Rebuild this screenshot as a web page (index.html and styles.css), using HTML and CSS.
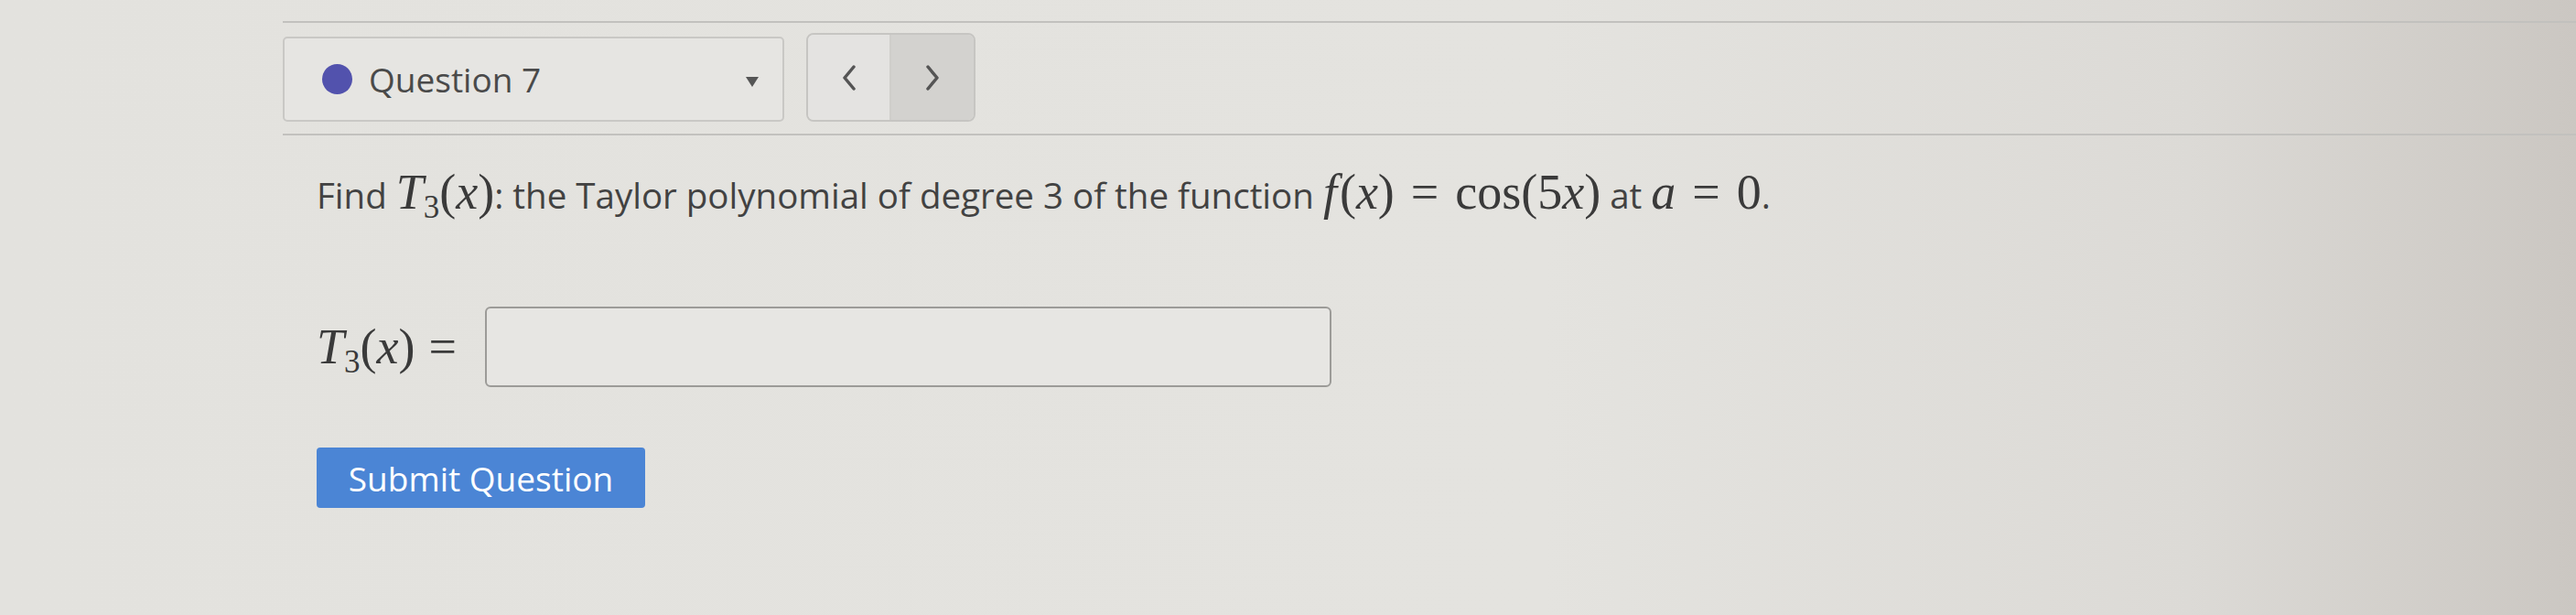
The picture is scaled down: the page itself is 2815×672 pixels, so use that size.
FILE: index.html
```html
<!DOCTYPE html>
<html lang="en">
<head>
  <meta charset="UTF-8">
  <title>Question 7</title>
  <link rel="stylesheet" href="styles.css">
</head>
<body>

<div class="qbar">
  <div class="qselect">
    <span class="dot"></span>
    <span class="qname">Question 7</span>
    <span class="caret"></span>
  </div>
  <div class="qnav">
    <button class="navbtn" aria-label="Previous">
      <svg width="16" height="28" viewBox="0 0 16 28"><polyline points="13,2 3,14 13,26" fill="none" stroke="#555" stroke-width="3.5" stroke-linejoin="round" stroke-linecap="round"/></svg>
    </button>
    <button class="navbtn hover" aria-label="Next">
      <svg width="16" height="28" viewBox="0 0 16 28"><polyline points="3,2 13,14 3,26" fill="none" stroke="#555" stroke-width="3.5" stroke-linejoin="round" stroke-linecap="round"/></svg>
    </button>
  </div>
</div>

<div class="question">
  <p class="prompt">Find <span class="math"><i>T</i><sub>3</sub>(<i>x</i>)</span>: the Taylor polynomial of degree 3 of the function <span class="math"><i class="fn">f</i>(<i>x</i>)<span class="rel">=</span>cos(5<i>x</i>)</span> at <span class="math"><i>a</i><span class="rel">=</span>0</span>.</p>

  <div class="answer-row">
    <label class="math answer-label" for="ans"><i>T</i><sub>3</sub>(<i>x</i>)<span class="rel">=</span></label>
    <input type="text" id="ans" class="answer">
  </div>

  <button class="submit">Submit Question</button>
</div>

</body>
</html>
```

FILE: styles.css
```css
body {
  margin: 0;
  width: 2815px;
  height: 672px;
  overflow: hidden;
  font-family: "Open Sans", "Noto Sans", sans-serif;
  color: #424242;
  background: linear-gradient(90deg, #e3e2de 0%, #e4e3df 60%, #dcdad6 85%, #cbc7c2 100%);
}
.qbar {
  display: flex;
  align-items: flex-start;
  margin: 23px 0 0 309px;
  padding: 11px 0 13px;
  border-top: 2px solid #c2c1be;
  border-bottom: 2px solid #c2c1be;
}
.qselect {
  display: flex;
  align-items: center;
  box-sizing: border-box;
  width: 548px;
  height: 93px;
  margin-top: 4px;
  padding: 0 26px 0 41px;
  border: 2px solid #c9c8c5;
  border-radius: 5px;
  background: #e6e5e2;
}
.dot {
  width: 33px;
  height: 33px;
  border-radius: 50%;
  background: #5252ad;
}
.qname {
  margin-left: 18px;
  font-size: 37px;
  color: #4a4a4a;
  flex: 1;
}
.caret {
  width: 0;
  height: 0;
  border-left: 7px solid transparent;
  border-right: 7px solid transparent;
  border-top: 11px solid #555;
  margin-top: 6px;
}
.qnav {
  display: flex;
  margin-left: 24px;
  height: 93px;
  border: 2px solid #c6c5c2;
  border-radius: 8px;
  overflow: hidden;
}
.navbtn {
  width: 89px;
  border: 0;
  padding: 0;
  background: #e4e3e1;
  display: flex;
  align-items: center;
  justify-content: center;
}
.navbtn.hover {
  width: 92px;
  border-left: 2px solid #cfcecb;
  background: #d3d2cf;
}
.question {
  margin-left: 346px;
}
.prompt {
  margin: 39px 0 0;
  font-size: 38.5px;
  line-height: 52px;
}
.math {
  font-family: "Liberation Serif", "DejaVu Serif", serif;
  font-size: 54px;
  line-height: 1;
  color: #3a3a3a;
}
.prompt .math {
  line-height: 0;
}
.math .fn {
  margin-right: 3px;
}
.math .rel {
  margin: 0 18px;
}
.math sub {
  font-size: 35px;
  vertical-align: -10px;
  line-height: 0;
}
.answer-row {
  display: flex;
  align-items: center;
  margin-top: 96px;
}
.answer-label {
  width: 184px;
}
.answer-label .rel {
  margin: 0 15px;
}
.answer {
  box-sizing: border-box;
  width: 925px;
  height: 88px;
  border: 2px solid #9c9b98;
  border-radius: 6px;
  background: #e7e6e3;
}
.submit {
  margin-top: 66px;
  width: 359px;
  height: 66px;
  border: 0;
  border-radius: 4px;
  background: #4b85d5;
  color: #fff;
  font-family: "Open Sans", "Noto Sans", sans-serif;
  font-size: 37px;
}
```
